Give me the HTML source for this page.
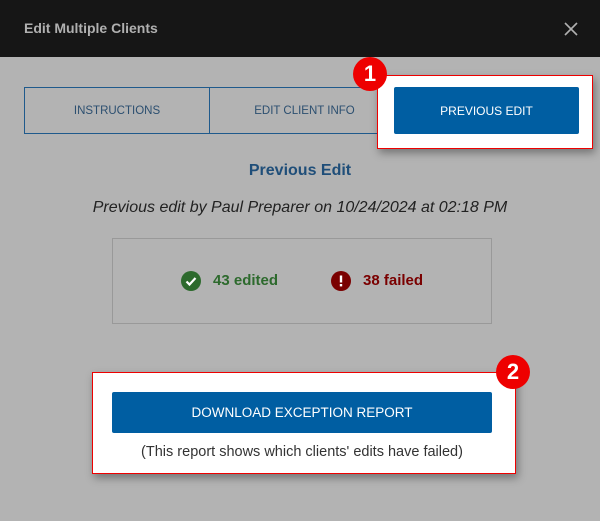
<!DOCTYPE html>
<html><head><meta charset="utf-8"><style>
*{margin:0;padding:0;box-sizing:border-box}
body{width:600px;height:521px;background:#b3b3b3;font-family:"Liberation Sans",sans-serif;position:relative;overflow:hidden}
.hdr{position:absolute;left:0;top:0;width:600px;height:57px;background:#161616}
.hdr .t{position:absolute;left:24px;top:20px;color:#b0b0b0;font-weight:bold;font-size:14px}
.abs{position:absolute}
.tab{position:absolute;top:87px;height:47px;border:1px solid #1f5a8c;color:#2c4f70;font-size:11.5px;display:flex;align-items:center;justify-content:center}
.badge{position:absolute;width:34px;height:34px;border-radius:50%;background:#e00;color:#fff;font-weight:bold;font-size:22px;display:flex;align-items:center;justify-content:center}
.callout{position:absolute;background:#fff;border:1px solid #e00;box-shadow:2px 4px 8px rgba(0,0,0,.35)}
</style></head><body>
<div class="hdr"><div class="t">Edit Multiple Clients</div>
<svg class="abs" style="left:564px;top:22px" width="14" height="14" viewBox="0 0 14 14"><path d="M1 1L13 13M13 1L1 13" stroke="#b0b0b0" stroke-width="1.6"/></svg></div>
<div class="tab" style="left:24px;width:186px">INSTRUCTIONS</div>
<div class="tab" style="left:209px;width:190px;border-right:none">EDIT CLIENT INFO</div>
<div class="callout" style="left:377px;top:75px;width:216px;height:74px"></div>
<div class="abs" style="left:394px;top:87px;width:185px;height:47px;background:#005ea2;border-radius:2px;color:#fff;font-size:12px;display:flex;align-items:center;justify-content:center">PREVIOUS EDIT</div>
<div class="badge" style="left:353px;top:57px">1</div>
<div class="abs" style="left:0;top:162px;width:600px;text-align:center;color:#1f4e79;font-weight:bold;font-size:16px">Previous Edit</div>
<div class="abs" style="left:0;top:199px;width:600px;text-align:center;color:#222;font-style:italic;font-size:16px">Previous edit by Paul Preparer on 10/24/2024 at 02:18 PM</div>
<div class="abs" style="left:112px;top:238px;width:380px;height:86px;border:1px solid #999"></div>
<svg class="abs" style="left:181px;top:271px" width="20" height="20" viewBox="0 0 20 20"><circle cx="10" cy="10" r="10" fill="#2d6a2d"/><path d="M5.5 10.5L8.5 13.5L14.5 7" stroke="#fff" stroke-width="2.2" fill="none"/></svg>
<div class="abs" style="left:213px;top:272px;color:#2d6a2d;font-weight:bold;font-size:15px">43 edited</div>
<svg class="abs" style="left:331px;top:271px" width="20" height="20" viewBox="0 0 20 20"><circle cx="10" cy="10" r="10" fill="#7a0000"/><rect x="8.8" y="4.5" width="2.4" height="7" fill="#fff"/><rect x="8.8" y="13" width="2.4" height="2.4" fill="#fff"/></svg>
<div class="abs" style="left:363px;top:272px;color:#7a0000;font-weight:bold;font-size:15px">38 failed</div>
<div class="callout" style="left:92px;top:372px;width:424px;height:102px"></div>
<div class="abs" style="left:112px;top:392px;width:380px;height:41px;background:#005ea2;border-radius:2px;color:#fff;font-size:13.5px;display:flex;align-items:center;justify-content:center">DOWNLOAD EXCEPTION REPORT</div>
<div class="abs" style="left:92px;top:444px;width:420px;text-align:center;color:#333;font-size:14.5px">(This report shows which clients' edits have failed)</div>
<div class="badge" style="left:496px;top:355px">2</div>
</body></html>
